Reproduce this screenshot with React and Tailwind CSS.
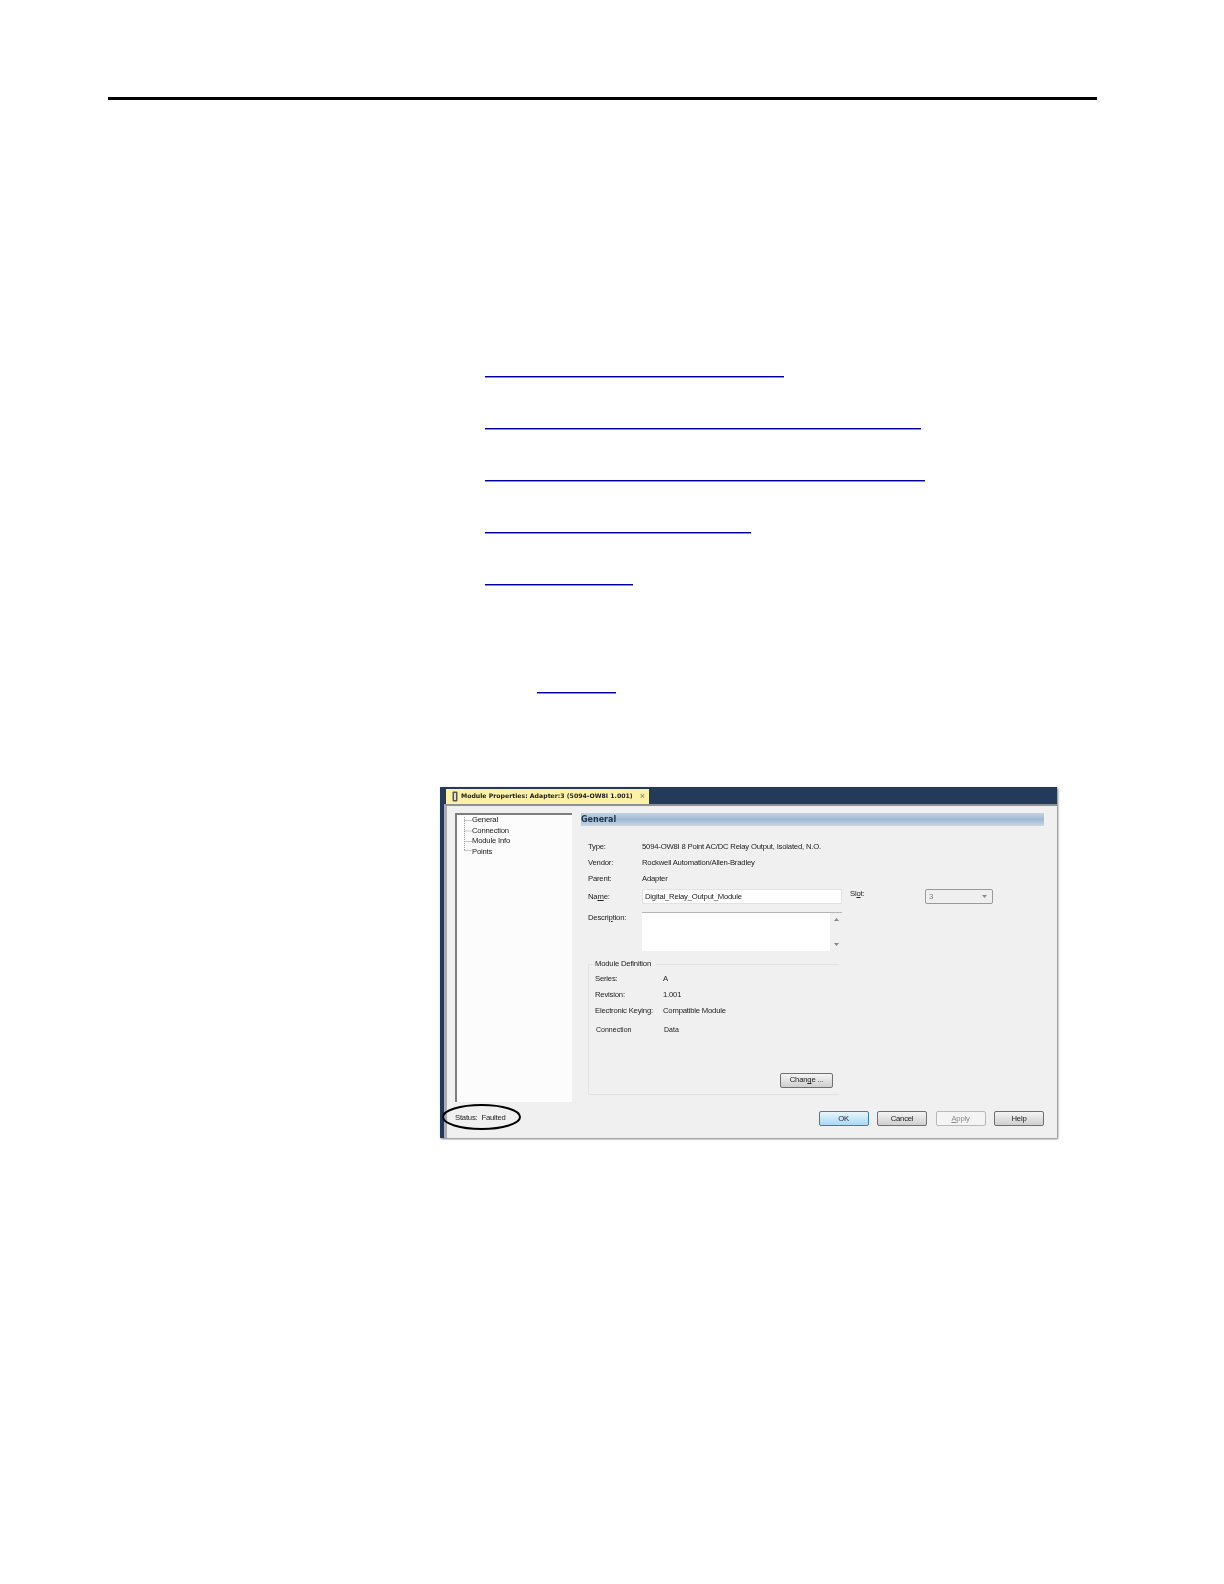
import React from 'react';

const linkWidths = [299, 436, 440, 266, 148];

function Field({ label, children, className = 'h-[16px]' }) {
    return (
        <div className={`flex items-center ${className}`}>
            <div className="w-[54px]">{label}</div>
            <div>{children}</div>
        </div>
    );
}

function DefRow({ label, value, className = 'h-[16px]' }) {
    return (
        <div className={`flex items-center whitespace-nowrap ${className}`}>
            <div className="w-[68px]">{label}</div>
            <div>{value}</div>
        </div>
    );
}

function WinButton({ children, className = '' }) {
    return (
        <div className={`flex h-[15px] w-[50px] items-center justify-center rounded-[2px] border ${className}`}>
            {children}
        </div>
    );
}

const greyButton = 'border-[#6f6f6f] bg-gradient-to-b from-[#f4f4f4] to-[#cfcfcf]';

function ModuleProperties() {
    return (
        <div className="relative ml-[440px] mt-[94px] h-[351px] w-[617px] font-['Liberation_Sans',sans-serif] text-[7.7px] leading-none tracking-[-0.2px] text-[#222] shadow-[1px_1px_2px_#777]">
            <div className="flex h-full flex-col blur-[0.4px]">
                <div className="flex h-[17px] items-end bg-[#243a5a] pl-[6px]">
                    <div className="flex h-[15px] w-[203px] items-center whitespace-nowrap bg-[#fdf1a8] pl-[6px] font-bold text-[#222]">
                        <svg width="6" height="11" viewBox="0 0 6 11" className="shrink-0">
                            <rect x="0.5" y="0.5" width="5" height="10" rx="1" fill="#555" />
                            <rect x="2" y="2" width="2" height="7" fill="#ddd" />
                        </svg>
                        <span className="ml-[3px] font-['DejaVu_Sans',sans-serif] text-[6.2px] tracking-normal">Module Properties: Adapter:3 (5094-OW8I 1.001)</span>
                        <span className="ml-[7px] text-[9px] font-normal text-[#777]">×</span>
                    </div>
                </div>
                <div className="flex flex-1 flex-col border-l-[4px] border-[#243a5a]">
                    <div className="flex flex-1 flex-col border-l-[3px] border-t-[2px] border-[#a9adb2] border-t-[#8d9095] bg-[#f0f0f0]">
                        <div className="flex pl-[8px] pt-[7px]">
                            <div className="relative h-[289px] w-[117px] border-l-[2px] border-t-[2px] border-[#7d7d7d] bg-[#fcfcfc] pl-[15px]">
                                <svg width="10" height="36" className="absolute left-[6px] top-[2px]" stroke="#999" strokeDasharray="1 1" fill="none">
                                    <path d="M1.5 0V33M1.5 3.5H9M1.5 14H9M1.5 24.500H9M1.5 33.500H9" />
                                </svg>
                                <div className="flex h-[10.5px] items-center">General</div>
                                <div className="flex h-[10.5px] items-center">Connection</div>
                                <div className="flex h-[10.5px] items-center">Module Info</div>
                                <div className="flex h-[10.5px] items-center">Points</div>
                            </div>
                            <div className="ml-[9px] w-[463px]">
                                <div className="flex h-[13px] items-center bg-gradient-to-b from-[#c3d3e4] via-[#9fb9d4] to-[#c9d8e7] font-['DejaVu_Sans',sans-serif] text-[8px] font-bold tracking-normal text-[#20384c]">
                                    General
                                </div>
                                <div className="pl-[7px] pt-[13px]">
                                    <Field label="Type:">5094-OW8I 8 Point AC/DC Relay Output, Isolated, N.O.</Field>
                                    <Field label="Vendor:">Rockwell Automation/Allen-Bradley</Field>
                                    <Field label="Parent:">Adapter</Field>
                                    <div className="mt-[2px] flex h-[15px] items-center">
                                        <div className="w-[54px]">Na<span className="underline">m</span>e:</div>
                                        <div className="flex h-[15px] w-[200px] items-center border border-[#e2e2e2] bg-white pl-[2px]">Digital_Relay_Output_Module</div>
                                        <div className="ml-[8px] mb-[5px] w-[75px]">Sl<span className="underline">o</span>t:</div>
                                        <div className="flex h-[15px] w-[68px] items-center justify-between rounded-[2px] border border-[#9a9a9a] bg-[#efefef] pl-[3px] pr-[5px] text-[#8a8a8a]">
                                            3
                                            <svg width="5" height="3" viewBox="0 0 5 3"><path d="M0 0H5L2.500 3Z" fill="#888" /></svg>
                                        </div>
                                    </div>
                                    <div className="mt-[8px] flex h-[39px]">
                                        <div className="w-[54px] pt-[2px]">Descri<span className="underline">p</span>tion:</div>
                                        <div className="flex w-[200px] border-t border-[#b5b5b5] bg-white">
                                            <div className="flex-1" />
                                            <div className="flex w-[12px] flex-col items-center justify-between bg-[#f0f0f0] py-[5px]">
                                                <svg width="5" height="3" viewBox="0 0 5 3"><path d="M0 3H5L2.500 0Z" fill="#888" /></svg>
                                                <svg width="5" height="3" viewBox="0 0 5 3"><path d="M0 0H5L2.500 3Z" fill="#888" /></svg>
                                            </div>
                                        </div>
                                    </div>
                                    <div className="mt-[13px] h-[131px] w-[252px] rounded-[2px] border border-[#e2e2e2] border-r-transparent pl-[6px]">
                                        <div className="-mt-[5px] w-fit bg-[#f0f0f0] pr-[5px]">Module Definition</div>
                                        <div className="pt-[3px]">
                                            <DefRow label="Series:" value="A" />
                                            <DefRow label="Revision:" value="1.001" />
                                            <DefRow label="Electronic Keying:" value="Compatible Module" />
                                            <DefRow className="mt-[3px] h-[16px] pl-[1px] text-[7px] tracking-normal" label="Connection" value="Data" />
                                        </div>
                                        <div className="ml-[185px] mt-[35px]">
                                            <div className={`flex h-[15px] w-[53px] items-center justify-center rounded-[2px] border ${greyButton}`}>
                                                Chan<span className="underline">g</span>e ...
                                            </div>
                                        </div>
                                    </div>
                                </div>
                            </div>
                        </div>
                        <div className="flex flex-1 justify-between pl-[8px] pr-[13px] pt-[9px]">
                            <div className="pt-[3px]">Status:&nbsp; Faulted</div>
                            <div className="flex gap-[8.500px]">
                                <WinButton className="border-[#3c7fb1] bg-gradient-to-b from-[#e8f6fd] to-[#a7d9f5]">OK</WinButton>
                                <WinButton className={greyButton}>Cancel</WinButton>
                                <WinButton className="border-[#b5b9bc] bg-[#f4f4f4] text-[#8a8a8a]"><span className="underline">A</span>pply</WinButton>
                                <WinButton className={greyButton}>Help</WinButton>
                            </div>
                        </div>
                    </div>
                </div>
            </div>
            {/* hand drawn callout round the status text */}
            <svg width="82" height="28" className="absolute left-[1px] top-[316px]" fill="none" stroke="#000" strokeWidth="2">
                <ellipse cx="40.500" cy="14" rx="38.500" ry="12" />
            </svg>
        </div>
    );
}

export default function App() {
    return (
        <div className="h-[1584px] w-[1224px] overflow-hidden bg-white pt-[97px]">
            <div className="ml-[108px] h-[3px] w-[989px] bg-black" />
            <div className="ml-[485px] mt-[276px] flex flex-col gap-[51px]">
                {linkWidths.map((width) => (
                    <div key={width} className="h-px bg-[#00009c] shadow-[0_1px_0_#8c8cd0]" style={{ width }} />
                ))}
            </div>
            <div className="ml-[537px] mt-[107px] h-px w-[79px] bg-[#00009c] shadow-[0_1px_0_#8c8cd0]" />
            <ModuleProperties />
        </div>
    );
}
